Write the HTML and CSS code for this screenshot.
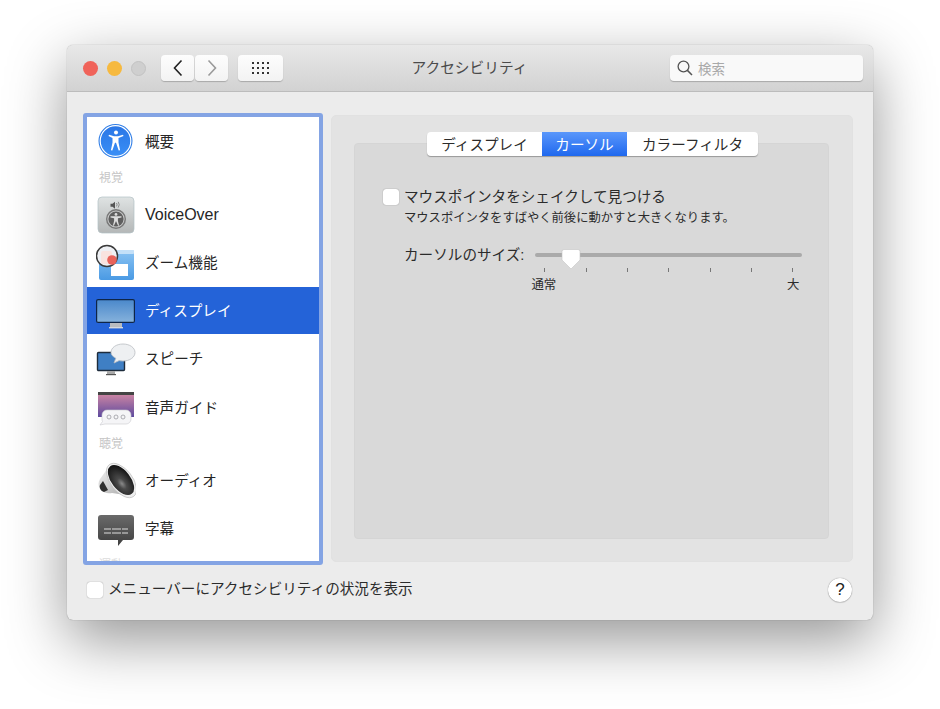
FILE: index.html
```html
<!DOCTYPE html>
<html lang="ja">
<head>
<meta charset="utf-8">
<title>アクセシビリティ</title>
<link rel="stylesheet" href="styles.css">
</head>
<body>
<svg class="defs" width="0" height="0">
  <defs>
    <linearGradient id="gBlue" x1="0" y1="0" x2="0" y2="1"><stop offset="0" stop-color="#2a76e6"/><stop offset="1" stop-color="#3a8ff6"/></linearGradient>
    <linearGradient id="gGrey" x1="0" y1="0" x2="0" y2="1"><stop offset="0" stop-color="#dfe3e3"/><stop offset="1" stop-color="#b4b7b7"/></linearGradient>
    <linearGradient id="gScreen" x1="0" y1="0" x2="0" y2="1"><stop offset="0" stop-color="#4a88cb"/><stop offset="1" stop-color="#86b2dc"/></linearGradient>
    <linearGradient id="gWin" x1="0" y1="0" x2="0" y2="1"><stop offset="0" stop-color="#8cc4f3"/><stop offset="1" stop-color="#4a9ae4"/></linearGradient>
    <linearGradient id="gGuide" x1="0" y1="0" x2="0" y2="1"><stop offset="0" stop-color="#d78aa4"/><stop offset="1" stop-color="#5d4a9e"/></linearGradient>
    <linearGradient id="gCap" x1="0" y1="0" x2="0" y2="1"><stop offset="0" stop-color="#6a6a6a"/><stop offset="1" stop-color="#3e3e3e"/></linearGradient>
    <radialGradient id="gCone" cx="0.42" cy="0.6" r="0.6"><stop offset="0" stop-color="#8a8a8a"/><stop offset="0.3" stop-color="#4a4a4a"/><stop offset="1" stop-color="#141414"/></radialGradient>
    <linearGradient id="gSilver" x1="0" y1="0" x2="1" y2="1"><stop offset="0" stop-color="#f4f4f4"/><stop offset="1" stop-color="#a4a4a4"/></linearGradient>
  </defs>
</svg>

<main class="window">
  <header class="toolbar">
    <div class="toolbar-left">
      <div class="lights">
        <span class="light light-red"></span>
        <span class="light light-yellow"></span>
        <span class="light light-off"></span>
      </div>
      <div class="nav">
        <button class="tool-btn nav-btn" type="button" aria-label="戻る">
          <svg width="12" height="18" viewBox="0 0 12 18"><path d="M9.5 1.5 2.500 9l7 7.500" fill="none" stroke="#222" stroke-width="1.600"/></svg>
        </button>
        <button class="tool-btn nav-btn" type="button" aria-label="進む">
          <svg width="12" height="18" viewBox="0 0 12 18"><path d="M2.500 1.500 9.500 9l-7 7.500" fill="none" stroke="#9a9a9a" stroke-width="1.600"/></svg>
        </button>
      </div>
      <button class="tool-btn grid-btn" type="button" aria-label="すべて表示">
        <svg width="17" height="12" viewBox="0 0 17 12" fill="#333">
          <rect x="0" y="0" width="2" height="2"/><rect x="5" y="0" width="2" height="2"/><rect x="10" y="0" width="2" height="2"/><rect x="15" y="0" width="2" height="2"/>
          <rect x="0" y="5" width="2" height="2"/><rect x="5" y="5" width="2" height="2"/><rect x="10" y="5" width="2" height="2"/><rect x="15" y="5" width="2" height="2"/>
          <rect x="0" y="10" width="2" height="2"/><rect x="5" y="10" width="2" height="2"/><rect x="10" y="10" width="2" height="2"/><rect x="15" y="10" width="2" height="2"/>
        </svg>
      </button>
    </div>
    <h1 class="title">アクセシビリティ</h1>
    <div class="search">
      <svg width="16" height="16" viewBox="0 0 16 16"><circle cx="6.500" cy="6.500" r="5.400" fill="none" stroke="#555" stroke-width="1.300"/><path d="M10.400 10.400 15 15" stroke="#555" stroke-width="1.500"/></svg>
      <span class="search-text">検索</span>
    </div>
  </header>

  <div class="content">
    <div class="columns">
      <nav class="sidebar">
        <div class="list">
          <div class="row">
            <svg class="icon" viewBox="0 0 40 40">
              <circle cx="19.500" cy="20" r="17" fill="#2f7de6"/>
              <circle cx="19.500" cy="20" r="15.300" fill="url(#gBlue)" stroke="#fff" stroke-width="1.200"/>
              <circle cx="20" cy="11.500" r="2" fill="#fff"/>
              <path d="M12.500 15 13 13.800l5 1.400h4l5-1.400.5 1.200-5 1.900v4.500l1.600 7.800-1.400.3-2.700-7.700h-1l-2.700 7.700-1.400-.3 1.600-7.800v-4.500z" fill="#fff"/>
            </svg>
            <span class="row-text">概要</span>
          </div>
          <div class="group">視覚</div>
          <div class="row">
            <svg class="icon" viewBox="0 0 40 40">
              <rect x="2" y="3" width="36" height="36" rx="4" fill="url(#gGrey)" stroke="#b3c2c6" stroke-width=".7"/>
              <path d="M14.500 9.700h2l2.500-2v7l-2.500-2h-2z" fill="#555"/>
              <path d="M20.500 9a3 3 0 0 1 0 3.400M22.200 7.800a5 5 0 0 1 0 5.800" fill="none" stroke="#777" stroke-width=".8"/>
              <circle cx="20" cy="25" r="10" fill="#777"/>
              <circle cx="20" cy="25" r="8.600" fill="#c9caca"/>
              <circle cx="20" cy="25" r="7.600" fill="#5f5f5f"/>
              <circle cx="20" cy="20.400" r="1.400" fill="#ddd"/>
              <path d="M14.500 22.200h11v1.200l-3.600.9v2.600l1.200 4.600-1 .2-2-4.400h-.2l-2 4.400-1-.2 1.200-4.600v-2.600l-3.600-.9z" fill="#ddd"/>
            </svg>
            <span class="row-latin">VoiceOver</span>
          </div>
          <div class="row">
            <svg class="icon" viewBox="0 0 40 40">
              <rect x="3" y="8" width="35" height="30" rx="2" fill="url(#gWin)"/>
              <rect x="3" y="8" width="35" height="4" rx="1" fill="#c4e0f8"/>
              <rect x="15" y="22" width="17" height="12" fill="#fff"/>
              <circle cx="11" cy="14" r="10.500" fill="#eef0f4" stroke="#3a3a3a" stroke-width="1.500"/>
              <rect x="5" y="9" width="11" height="13" rx="2" fill="#f9e3df"/>
              <circle cx="16" cy="18" r="4.800" fill="#e8625a"/>
            </svg>
            <span class="row-text">ズーム機能</span>
          </div>
          <div class="row row-active">
            <svg class="icon" viewBox="0 0 40 40">
              <rect x="0.600" y="8.600" width="37.800" height="22.800" rx="1.500" fill="url(#gScreen)" stroke="#0e2547" stroke-width="1.200"/>
              <rect x="14" y="32" width="12" height="4" fill="#b9bcc0"/>
              <rect x="13" y="36" width="14" height="1.400" fill="#d7d9dc"/>
            </svg>
            <span class="row-text">ディスプレイ</span>
          </div>
          <div class="row">
            <svg class="icon" viewBox="0 0 40 40">
              <rect x="1.500" y="14.500" width="27" height="18" rx="1" fill="#3f7fc4" stroke="#1e2c3c" stroke-width="1.400"/>
              <rect x="11" y="33" width="8" height="3.200" fill="#aaa"/>
              <rect x="10" y="36" width="10" height="1.200" fill="#555"/>
              <path d="M27 6c6.800 0 12 3.700 12 8.500S33.800 23 27 23c-1.300 0-2.600-.1-3.800-.4L18 25l1.800-4.800C17 18.700 15 16.800 15 14.500 15 9.700 20.200 6 27 6z" fill="#eef0f2" stroke="#b9bdc2" stroke-width=".8"/>
            </svg>
            <span class="row-text">スピーチ</span>
          </div>
          <div class="row row-shift">
            <svg class="icon" viewBox="0 0 40 40">
              <rect x="2" y="5" width="36" height="25" fill="url(#gGuide)"/>
              <rect x="2" y="5" width="36" height="3" fill="#444"/>
              <path d="M11 23h19a5 5 0 0 1 5 5v4a5 5 0 0 1-5 5H9l-5 1 2.500-3.500A5 5 0 0 1 6 32v-4a5 5 0 0 1 5-5z" fill="#f5f5f7" stroke="#c9c9cf" stroke-width=".6"/>
              <circle cx="13" cy="30" r="2" fill="none" stroke="#9a9aa2" stroke-width=".8"/>
              <circle cx="20" cy="30" r="2" fill="none" stroke="#9a9aa2" stroke-width=".8"/>
              <circle cx="27" cy="30" r="2" fill="none" stroke="#9a9aa2" stroke-width=".8"/>
            </svg>
            <span class="row-text">音声ガイド</span>
          </div>
          <div class="group">聴覚</div>
          <div class="row">
            <svg class="icon" viewBox="0 0 40 40">
              <path d="M14 5 4 19c-2 3-2 7 0 10 3 4 8 5 12 4l20 3z" fill="url(#gSilver)"/>
              <path d="M7 21 4 25c-1 3 1 6 4 7l4-2z" fill="#2e2e2e"/>
              <ellipse cx="25.500" cy="20.500" rx="11" ry="20" transform="rotate(-38 25.500 20.500)" fill="#eeeeee" stroke="#b5b5b5" stroke-width=".6"/>
              <ellipse cx="25" cy="20" rx="9.500" ry="17.500" transform="rotate(-38 25 20)" fill="url(#gCone)"/>
            </svg>
            <span class="row-text">オーディオ</span>
          </div>
          <div class="row">
            <svg class="icon" viewBox="0 0 40 40">
              <path d="M5 7h30a3 3 0 0 1 3 3v19a3 3 0 0 1-3 3H27l-5 6v-6H5a3 3 0 0 1-3-3V10a3 3 0 0 1 3-3z" fill="url(#gCap)"/>
              <path d="M8 21h24M8 25h24" stroke="#dedede" stroke-width="1.200" stroke-dasharray="7 1 9 1"/>
            </svg>
            <span class="row-text">字幕</span>
          </div>
          <div class="group group-cut">運動</div>
        </div>
      </nav>

      <section class="panel">
        <div class="tabs">
          <span class="tab tab-a">ディスプレイ</span>
          <span class="tab tab-b tab-active">カーソル</span>
          <span class="tab tab-c">カラーフィルタ</span>
        </div>
        <div class="pane">
          <div class="option">
            <span class="checkbox"></span>
            <span class="option-label">マウスポインタをシェイクして見つける</span>
          </div>
          <p class="hint">マウスポインタをすばやく前後に動かすと大きくなります。</p>
          <div class="size-row">
            <span class="size-label">カーソルのサイズ:</span>
            <div class="slider">
              <div class="track">
                <svg class="thumb" width="20" height="21" viewBox="0 0 20 21"><path d="M3 .5h14a2 2 0 0 1 2 2v8.500L10 20 1 11V2.500a2 2 0 0 1 2-2z" fill="#fff" stroke="#c4c4c4" stroke-width=".6"/></svg>
              </div>
              <div class="ticks">
                <i></i><i></i><i></i><i></i><i></i><i></i><i></i>
              </div>
              <div class="scale">
                <span>通常</span>
                <span>大</span>
              </div>
            </div>
          </div>
        </div>
      </section>
    </div>

    <footer class="footer">
      <div class="footer-option">
        <span class="checkbox"></span>
        <span class="footer-label">メニューバーにアクセシビリティの状況を表示</span>
      </div>
      <button class="help" type="button">?</button>
    </footer>
  </div>
</main>
</body>
</html>
```

FILE: styles.css
```css
* { box-sizing: border-box; }

html, body { height: 100%; }

body {
  margin: 0;
  padding: 45px 0 0 67px;
  background: #fff;
  font-family: "Liberation Sans", "Noto Sans CJK JP", sans-serif;
  color: #262626;
  overflow: hidden;
}

.defs { position: absolute; }

.window {
  width: 806px;
  height: 575px;
  background: #ececec;
  border-radius: 6px;
  box-shadow: 0 20px 60px rgba(0, 0, 0, .42), 0 0 1px rgba(0, 0, 0, .45);
  display: flex;
  flex-direction: column;
  overflow: hidden;
}

.toolbar {
  height: 47px;
  flex: none;
  display: grid;
  grid-template-columns: 1fr auto 1fr;
  align-items: center;
  padding: 0 10px 0 16px;
  background: linear-gradient(#e8e8e8, #d2d2d2);
  border-bottom: 1px solid #bcbcbc;
}

.toolbar-left { display: flex; align-items: center; }

.lights { display: flex; gap: 9px; margin-right: 15px; }

.light { width: 15px; height: 15px; border-radius: 50%; }
.light-red { background: #f0635a; }
.light-yellow { background: #f6b93f; }
.light-off { background: #cfcfcf; border: 1px solid #c2c2c2; }

.nav { display: flex; gap: 1px; margin-right: 10px; }

.tool-btn {
  height: 26px;
  padding: 0;
  border: 0;
  border-radius: 4px;
  background: linear-gradient(#fdfdfd, #f3f3f3);
  box-shadow: 0 1px 1px rgba(0, 0, 0, .22);
  display: flex;
  align-items: center;
  justify-content: center;
}

.nav-btn { width: 33px; }
.grid-btn { width: 45px; }

.title {
  margin: 0 7px 0 0;
  font-size: 14.7px;
  font-weight: 400;
  color: #4b4b4b;
  line-height: 20px;
}

.search {
  justify-self: end;
  width: 193px;
  height: 26px;
  padding-left: 7px;
  border-radius: 4px;
  background: #f9f9f9;
  box-shadow: 0 1px 1px rgba(0, 0, 0, .22);
  display: flex;
  align-items: center;
  gap: 5px;
}

.search-text { font-size: 13.5px; color: #a9a9a9; }

.content {
  flex: 1;
  min-height: 0;
  padding: 21px 20px 0 16px;
  display: flex;
  flex-direction: column;
}

.columns { display: flex; gap: 8px; align-items: flex-start; }

.sidebar {
  width: 240px;
  height: 452px;
  flex: none;
  border: 4px solid #84a4e4;
  border-radius: 3px;
  background: #fff;
  overflow: hidden;
}

.row {
  height: 48px;
  padding-left: 9px;
  display: flex;
  align-items: center;
  gap: 9px;
  font-size: 14.6px;
  color: #262626;
}

.row-text { margin-bottom: 2px; }
.row-latin { margin-top: 2px; font-size: 16px; }

.row-active { background: #2463d8; color: #fff; margin-top: 1px; height: 47px; }
.row-shift { margin-top: 1px; }

.icon { width: 40px; height: 40px; flex: none; }

.group {
  height: 25px;
  padding-left: 12px;
  font-size: 12px;
  line-height: 27px;
  color: #c6c6c6;
}

.group-cut { line-height: 26px; color: #dcdcdc; }

.panel {
  width: 522px;
  height: 447px;
  margin-top: 2px;
  padding: 16px 24px 0 23px;
  background: #e3e3e3;
  border-radius: 5px;
  border: 1px solid #e1e1e1;
  display: flex;
  flex-direction: column;
  align-items: center;
}

.tabs {
  height: 24px;
  margin-left: 2px;
  display: flex;
  background: #fff;
  border-radius: 4px;
  box-shadow: 0 1px 1px rgba(0, 0, 0, .3);
  position: relative;
  z-index: 1;
  font-size: 14.6px;
}

.tab {
  padding-bottom: 2px;
  display: flex;
  align-items: center;
  justify-content: center;
  color: #2b2b2b;
}

.tab-a { width: 115px; }
.tab-b { width: 85px; }
.tab-c { width: 131px; }

.tab-active {
  background: linear-gradient(#5a97fb, #1f68ee);
  color: #fff;
}

.pane {
  width: 475px;
  height: 396px;
  margin-top: -13px;
  padding: 44px 0 0 28px;
  background: #d9d9d9;
  border-radius: 4px;
  border: 1px solid #d5d5d5;
}

.option, .footer-option { display: flex; align-items: center; gap: 5px; }

.checkbox {
  width: 16px;
  height: 16px;
  flex: none;
  background: #fff;
  border-radius: 3px;
  box-shadow: 0 0 1px rgba(0, 0, 0, .5);
}

.option-label, .footer-label { font-size: 14.6px; line-height: 18px; color: #2b2b2b; }

.footer-label { margin-bottom: 2px; }

.hint {
  margin: 4px 0 0 21px;
  font-size: 12.3px;
  line-height: 16px;
  color: #2b2b2b;
}

.size-row {
  margin: 19px 0 0 21px;
  display: flex;
  align-items: flex-start;
  gap: 11px;
}

.size-label { font-size: 14.6px; line-height: 20px; color: #2b2b2b; }

.slider { width: 267px; padding-top: 8px; position: relative; }

.track {
  height: 4px;
  border-radius: 2px;
  background: #aaa;
  position: relative;
}

.thumb { position: absolute; left: 26px; top: -4px; }

.ticks {
  margin-top: 11px;
  padding: 0 9px;
  display: flex;
  justify-content: space-between;
}

.ticks i { width: 1px; height: 4px; background: #777; }

.scale {
  margin: 4px 0 0 -4px;
  padding-right: 3px;
  display: flex;
  justify-content: space-between;
  font-size: 12.4px;
  line-height: 18px;
  color: #2b2b2b;
}

.footer {
  margin: 13px 1px 0 0;
  padding-left: 4px;
  display: flex;
  justify-content: space-between;
  align-items: center;
}

.help {
  width: 24px;
  height: 24px;
  padding: 0;
  border: 0;
  border-radius: 50%;
  background: #fff;
  box-shadow: 0 0 1px rgba(0, 0, 0, .55), 0 1px 1px rgba(0, 0, 0, .12);
  font-family: "Liberation Sans", sans-serif;
  font-size: 17px;
  color: #222;
}
```
